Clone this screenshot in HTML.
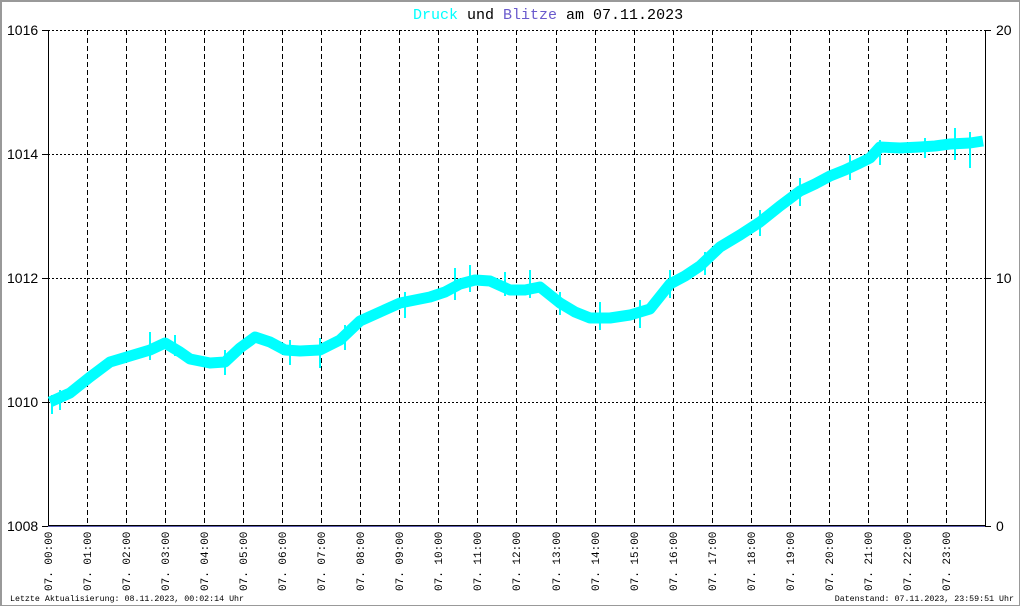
<!DOCTYPE html>
<html><head><meta charset="utf-8"><style>
html,body{margin:0;padding:0;background:#fff}
#w{position:relative;width:1020px;height:606px;overflow:hidden;background:#fff;box-sizing:border-box;border:2px solid #999;border-right-width:1px;border-bottom-width:1px}
.t{position:absolute;font-family:"Liberation Mono",monospace;white-space:pre}
.yl{position:absolute;font-family:"Liberation Sans",sans-serif;font-size:14px;color:#000}
.xl{position:absolute;font-family:"Liberation Mono",monospace;font-size:11px;transform-origin:0 0;transform:rotate(-90deg);white-space:pre}
svg{position:absolute;left:-2px;top:-2px}
</style></head><body><div id="w">
<svg width="1020" height="606" viewBox="0 0 1020 606" shape-rendering="crispEdges">
<g stroke="#000" stroke-width="1" fill="none">
<path d="M48 30.5H985M48 154.5H985M48 278.5H985M48 402.5H985" stroke-dasharray="2 2"/>
<path d="M87.5 30V526M126.5 30V526M165.5 30V526M204.5 30V526M243.5 30V526M282.5 30V526M321.5 30V526M360.5 30V526M399.5 30V526M438.5 30V526M477.5 30V526M516.5 30V526M556.5 30V526M595.5 30V526M634.5 30V526M673.5 30V526M712.5 30V526M751.5 30V526M790.5 30V526M829.5 30V526M868.5 30V526M907.5 30V526M946.5 30V526" stroke-dasharray="5 3"/>
<path d="M48.5 30V526M985.5 30V527M42 30.5H48M42 154.5H48M42 278.5H48M42 402.5H48M42 526.5H48M985 30.5H991M985 278.5H991M985 526.5H991M48 525.5H985"/>
</g>
<path d="M48 526.5H985" stroke="#6060b0"/>
<polyline fill="none" stroke="#00ffff" stroke-width="11" stroke-linejoin="round" shape-rendering="auto" points="50,402 70,393 90,377 110,362 130,356 150,350 165,343 180,352 190,359 210,363 225,362 240,348 255,337 270,342 285,350 300,351 320,350 340,340 360,321 380,312 400,303 415,300 430,297 445,292 460,284 475,280 490,281 510,290 525,290 540,287 560,303 575,312 590,318 610,318 630,315 650,309 670,284 685,276 700,266 720,247 740,235 760,222 780,206 800,191 815,184 830,176 845,170 860,163 870,158 880,147 900,148 920,147 935,146 950,144 970,143 983,141"/>
<g stroke="#00ffff" stroke-width="2" shape-rendering="auto">
<path d="M52 395V414M60 390V410M150 332V360M175 335V356M225 350V375M290 340V365M320 338V368M345 325V350M405 292V318M455 268V300M470 265V292M505 272V296M530 270V298M560 292V315M600 302V330M640 300V328M670 270V298M705 252V275M760 210V236M800 178V206M850 155V180M880 140V165M925 138V158M955 128V160M970 132V168"/>
</g>
</svg>
<div class="t" style="left:411px;top:5px;font-size:15px"><span style="color:#00ffff">Druck</span> und <span style="color:#6a5acd">Blitze</span> am 07.11.2023</div>
<div class="yl" style="left:5px;top:20px">1016</div>
<div class="yl" style="left:5px;top:144px">1014</div>
<div class="yl" style="left:5px;top:268px">1012</div>
<div class="yl" style="left:5px;top:392px">1010</div>
<div class="yl" style="left:5px;top:516px">1008</div>
<div class="yl" style="left:994px;top:20px">20</div>
<div class="yl" style="left:994px;top:268px">10</div>
<div class="yl" style="left:994px;top:516px">0</div>
<div class="xl" style="left:42px;top:589px">07. 00:00</div>
<div class="xl" style="left:81px;top:589px">07. 01:00</div>
<div class="xl" style="left:120px;top:589px">07. 02:00</div>
<div class="xl" style="left:159px;top:589px">07. 03:00</div>
<div class="xl" style="left:198px;top:589px">07. 04:00</div>
<div class="xl" style="left:237px;top:589px">07. 05:00</div>
<div class="xl" style="left:276px;top:589px">07. 06:00</div>
<div class="xl" style="left:315px;top:589px">07. 07:00</div>
<div class="xl" style="left:354px;top:589px">07. 08:00</div>
<div class="xl" style="left:393px;top:589px">07. 09:00</div>
<div class="xl" style="left:432px;top:589px">07. 10:00</div>
<div class="xl" style="left:471px;top:589px">07. 11:00</div>
<div class="xl" style="left:510px;top:589px">07. 12:00</div>
<div class="xl" style="left:550px;top:589px">07. 13:00</div>
<div class="xl" style="left:589px;top:589px">07. 14:00</div>
<div class="xl" style="left:628px;top:589px">07. 15:00</div>
<div class="xl" style="left:667px;top:589px">07. 16:00</div>
<div class="xl" style="left:706px;top:589px">07. 17:00</div>
<div class="xl" style="left:745px;top:589px">07. 18:00</div>
<div class="xl" style="left:784px;top:589px">07. 19:00</div>
<div class="xl" style="left:823px;top:589px">07. 20:00</div>
<div class="xl" style="left:862px;top:589px">07. 21:00</div>
<div class="xl" style="left:901px;top:589px">07. 22:00</div>
<div class="xl" style="left:940px;top:589px">07. 23:00</div>
<div class="t" style="left:8px;top:593px;font-size:8.3px">Letzte Aktualisierung: 08.11.2023, 00:02:14 Uhr</div>
<div class="t" style="right:5px;top:593px;font-size:8.3px">Datenstand: 07.11.2023, 23:59:51 Uhr</div>
</div>
</body></html>
